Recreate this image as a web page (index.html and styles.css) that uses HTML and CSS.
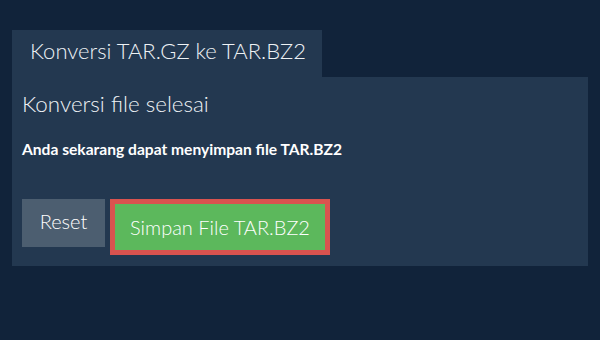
FILE: index.html
```html
<!DOCTYPE html>
<html lang="id">
<head>
<meta charset="utf-8">
<link rel="stylesheet" href="styles.css">
</head>
<body>
<div class="wrap">
  <div class="tab">Konversi TAR.GZ ke TAR.BZ2</div>
  <div class="panel">
    <h2 class="title">Konversi file selesai</h2>
    <p class="msg">Anda sekarang dapat menyimpan file TAR.BZ2</p>
    <div class="actions">
      <button class="btn reset">Reset</button>
      <button class="btn save">Simpan File TAR.BZ2</button>
    </div>
  </div>
</div>
</body>
</html>
```
FILE: styles.css
```css
html, body {
  margin: 0;
  padding: 0;
  background: #11233a;
  font-family: Lato, "Open Sans", sans-serif;
  color: #ffffff;
}
.wrap {
  padding: 30px 12px 0 12px;
}
.tab {
  display: inline-block;
  width: 310px;
  height: 47px;
  box-sizing: border-box;
  background: #233850;
  padding: 7px 0 0 18px;
  font-size: 22px;
  font-weight: 300;
  line-height: 28px;
  color: #eef2f5;
}
.panel {
  background: #233850;
  height: 189px;
  box-sizing: border-box;
  padding: 13px 10px 0 10px;
}
.title {
  margin: 0;
  font-size: 22.4px;
  font-weight: 300;
  line-height: 28px;
  color: #eef2f5;
}
.msg {
  margin: 22px 0 0 0;
  font-size: 15.6px;
  font-weight: 700;
  line-height: 18px;
}
.actions {
  display: flex;
  align-items: flex-start;
  gap: 5px;
  margin-top: 41px;
}
.btn {
  font-family: Lato, "Open Sans", sans-serif;
  font-size: 20px;
  font-weight: 300;
  color: #ffffff;
  border: none;
  margin: 0;
  cursor: pointer;
}
.reset {
  background: #4c5e70;
  width: 83px;
  height: 48px;
  padding: 0 0 4px 0;
}
.save {
  background: #5cb85c;
  border: 5px solid #d9534f;
  width: 220px;
  height: 56px;
  padding: 0;
}
```
